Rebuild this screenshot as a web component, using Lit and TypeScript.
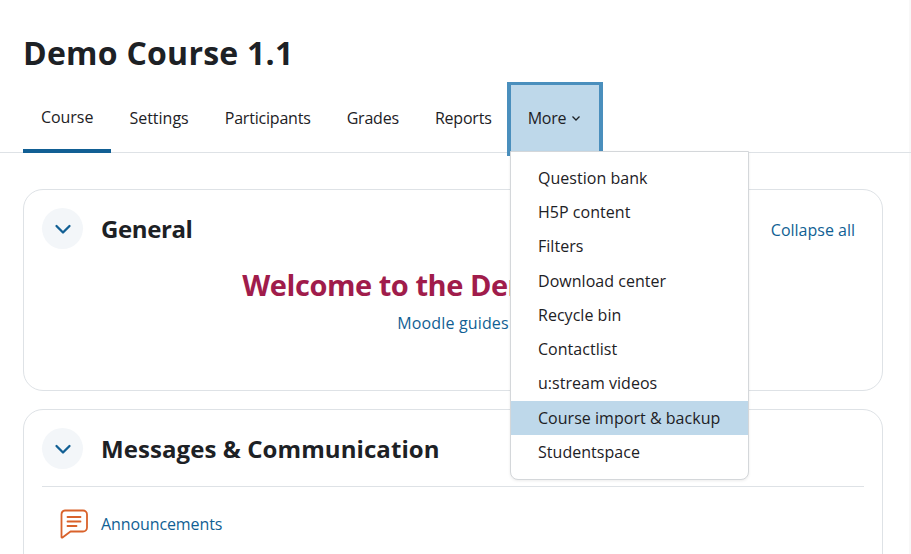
import { LitElement, html, css } from "lit";
import { customElement } from "lit/decorators.js";

const chevron = html`<svg width="20" height="20" viewBox="0 0 20 20" fill="none" stroke="#115f94" stroke-width="2.3" stroke-linecap="round" stroke-linejoin="round"><path d="M3.5 7l6.5 6.5L16.500 7"/></svg>`;

@customElement("app-root")
export class AppRoot extends LitElement {
  static styles = css`
    :host { display: block; width: 911px; height: 554px; overflow: hidden; position: relative; background: #fff; box-shadow: inset -2px 0 0 #f8f8f8; color: #1d2125; font-family: "Open Sans", "Noto Sans", sans-serif; font-size: 16px; }
    h1 { margin: 0; padding: 33px 0 0 23px; font-size: 32px; line-height: 39px; font-weight: 700; height: 49px; letter-spacing: 0.25px; }
    .tabs { display: flex; height: 70px; border-bottom: 1px solid #dee2e6; padding-left: 23px; box-sizing: content-box; }
    .tab { padding: 0 18px; display: flex; align-items: center; height: 70px; box-sizing: border-box; font-size: 16px; letter-spacing: -0.2px; }
    .tab span { position: relative; top: 1px; }
    .tab.wide { letter-spacing: 0; }
    .tab.active { border-bottom: 4px solid #115f94; margin-bottom: -1px; height: 71px; letter-spacing: -0.05px; }
    .more { height: 74px; width: 96px; box-sizing: border-box; background: #bed8ea; border: 4px solid #4a8fbd; border-top-width: 3px; margin-left: -3px; padding: 0 0 0 17px; gap: 5px; }
    .more span { top: -1px; }
    .more svg { position: relative; top: -1px; }
    .main { padding: 36px 28px 0 23px; display: flex; flex-direction: column; gap: 18px; }
    .card { border: 1px solid #dee2e6; border-radius: 20px; padding: 18px 18px 0 18px; }
    .card.first { height: 182px; }
    .card.last { height: 200px; }
    .head { display: flex; align-items: center; gap: 18px; height: 41px; }
    .circle { width: 41px; height: 41px; border-radius: 50%; background: #f3f6f9; display: flex; align-items: center; justify-content: center; flex: none; }
    h2 { margin: 0; font-size: 24px; line-height: 30px; font-weight: 700; letter-spacing: 0.08px; }
    h2.short { letter-spacing: -0.4px; }
    .collapse { margin-left: auto; margin-right: 9px; color: #115f94; font-size: 16px; letter-spacing: 0; position: relative; top: 1px; }
    .welcome { text-align: center; color: #a01c4b; font-size: 29px; line-height: 36px; font-weight: 700; margin: 18px 0 0; padding-right: 6px; letter-spacing: -0.45px; }
    .guides { text-align: center; color: #115f94; font-size: 16px; letter-spacing: 0.15px; line-height: 22px; margin-top: 9px; }
    .rule { border-top: 1px solid #dee2e6; margin-top: 17px; }
    .activity { display: flex; align-items: center; gap: 12px; padding: 22px 0 0 17px; color: #115f94; letter-spacing: -0.1px; }
    .activity svg { flex: none; }
    .menu { position: absolute; left: 510px; top: 151px; width: 239px; height: 329px; box-sizing: border-box; background: #fff; border: 1px solid #d4d7da; border-radius: 0 0 8px 8px; padding: 8.5px 0; box-shadow: 0 1px 3px rgba(0,0,0,.08); }
    .item { height: 34.3px; display: flex; align-items: center; padding-left: 27px; letter-spacing: 0.03px; color: #1d2125; }
    .item.sel { background: #bed8ea; }
  `;

  render() {
    const items = ["Question bank", "H5P content", "Filters", "Download center", "Recycle bin", "Contactlist", "u:stream videos", "Course import & backup", "Studentspace"];
    return html`
      <h1>Demo Course 1.1</h1>
      <nav class="tabs">
        <div class="tab active"><span>Course</span></div>
        <div class="tab wide"><span>Settings</span></div>
        <div class="tab"><span>Participants</span></div>
        <div class="tab"><span>Grades</span></div>
        <div class="tab"><span>Reports</span></div>
        <div class="tab more"><span>More</span>
          <svg width="10" height="10" viewBox="0 0 10 10" fill="none" stroke="#1d2125" stroke-width="1.3"><path d="M1.5 3.500L5 7l3.500-3.500"/></svg>
        </div>
      </nav>
      <div class="main">
        <section class="card first">
          <div class="head"><div class="circle">${chevron}</div><h2 class="short">General</h2><a class="collapse">Collapse all</a></div>
          <div class="welcome">Welcome to the Demo Course</div>
          <div class="guides">Moodle guides</div>
        </section>
        <section class="card last">
          <div class="head"><div class="circle">${chevron}</div><h2>Messages &amp; Communication</h2></div>
          <div class="rule"></div>
          <div class="activity">
            <svg width="30" height="30" viewBox="0 0 30 30" fill="none" stroke="#d9622b" stroke-width="1.8" stroke-linecap="round" stroke-linejoin="round"><path d="M6 1.500h18a4 4 0 0 1 4 4v13a4 4 0 0 1-4 4H11.500L3.500 28.500a.6.6 0 0 1-1-.4V5.500a4 4 0 0 1 3.500-4z"/><path d="M8.500 8h13M8.500 12.500h13M8.500 17h9"/></svg>
            <span>Announcements</span>
          </div>
        </section>
      </div>
      <div class="menu">
        ${items.map((t) => html`<div class="item ${t.startsWith("Course") ? "sel" : ""}">${t}</div>`)}
      </div>
    `;
  }
}
